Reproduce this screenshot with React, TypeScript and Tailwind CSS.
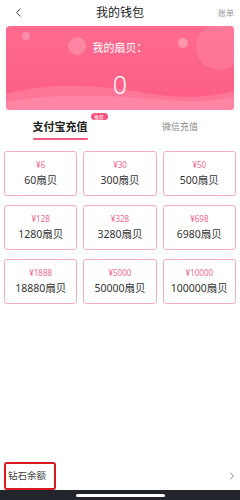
import { ChevronLeft, ChevronRight } from 'lucide-react';

const packs = [
  { price: '¥6', amount: '60扇贝' },
  { price: '¥30', amount: '300扇贝' },
  { price: '¥50', amount: '500扇贝' },
  { price: '¥128', amount: '1280扇贝' },
  { price: '¥328', amount: '3280扇贝' },
  { price: '¥698', amount: '6980扇贝' },
  { price: '¥1888', amount: '18880扇贝' },
  { price: '¥5000', amount: '50000扇贝' },
  { price: '¥10000', amount: '100000扇贝' },
];

export default function App() {
  return (
    <div
      className="w-[240px] h-[500px] bg-white flex flex-col overflow-hidden"
      style={{ fontFamily: '"Noto Sans", "Noto Sans CJK SC", sans-serif' }}
    >
      {/* header */}
      <div className="h-[25px] flex items-center pl-[11px] pr-[6px] relative">
        <ChevronLeft className="w-[15px] h-[15px] text-[#333]" strokeWidth={1.5} />
        <div className="absolute left-0 right-0 text-center text-[12px] text-[#222] leading-none pointer-events-none">
          我的钱包
        </div>
        <div className="ml-auto text-[8px] text-[#999]">账单</div>
      </div>

      {/* balance card */}
      <div className="mx-[6px] mt-[1px] h-[84px] rounded-[4px] relative overflow-hidden bg-gradient-to-b from-[#fe6b8e] to-[#fd5c84]">
        <div className="absolute w-[8px] h-[8px] rounded-full bg-white/25 left-[16px] top-[6px]" />
        <div className="absolute w-[18px] h-[18px] rounded-full bg-white/20 left-[62px] top-[11px]" />
        <div className="absolute w-[10px] h-[10px] rounded-full bg-white/30 left-[172px] top-[12px]" />
        <div className="absolute w-[46px] h-[46px] rounded-full bg-white/10 left-[190px] top-[-2px]" />
        <svg className="absolute left-0 bottom-0" width="228" height="30" viewBox="0 0 228 30" preserveAspectRatio="none">
          <path d="M0 14 C40 3 90 4 140 13 C180 20 210 16 228 11 L228 30 L0 30 Z" fill="#ff88a5" opacity="0.55" />
          <path d="M0 22 C50 12 110 16 160 20 C190 23 215 20 228 17 L228 30 L0 30 Z" fill="#ff9ab4" opacity="0.45" />
        </svg>
        <div className="relative flex flex-col items-center">
          <div className="mt-[16px] text-[11px] text-white leading-none">我的扇贝：</div>
          <div className="mt-[19px] text-[25px] font-light text-white leading-none">0</div>
        </div>
      </div>

      {/* tabs */}
      <div className="h-[38px] flex items-start pt-[11px]">
        <div className="w-[120px] flex justify-center">
          <div className="relative flex flex-col items-center">
            <div className="text-[11px] font-bold text-[#222] leading-none">支付宝充值</div>
            <div className="mt-[6px] w-[55px] h-[2px] bg-[#f25a80] rounded" />
            <div className="absolute left-[58px] top-[-8px] w-[17px] h-[7px] bg-[#f4557e] rounded-full flex items-center justify-center overflow-hidden">
              <span className="whitespace-nowrap text-white text-[8px] leading-none scale-[0.6]">推荐</span>
            </div>
          </div>
        </div>
        <div className="w-[120px] flex justify-center">
          <div className="text-[9px] text-[#888] leading-none mt-[1px]">微信充值</div>
        </div>
      </div>

      {/* grid */}
      <div className="grid grid-cols-3 gap-x-[6px] gap-y-[9px] px-[4px] mt-[3px]">
        {packs.map((p) => (
          <div
            key={p.price}
            className="h-[45px] rounded-[3px] border border-[#f2adc0] flex flex-col items-center justify-center"
          >
            <div className="text-[8px] text-[#f4678e] leading-none">{p.price}</div>
            <div className="mt-[6px] text-[10.5px] text-[#333] leading-none">{p.amount}</div>
          </div>
        ))}
      </div>

      {/* bottom */}
      <div className="mt-auto flex items-center h-[28px] pr-[2px]">
        <div className="ml-[4px] h-[28px] w-[52px] border-2 border-[#d9181f] rounded-[3px] flex items-center pl-[2px]">
          <span className="text-[9.5px] text-[#444] leading-none">钻石余额</span>
        </div>
        <ChevronRight className="ml-auto w-[12px] h-[12px] text-[#555]" strokeWidth={1.5} />
      </div>
      <div className="h-[10px] bg-[#22252b] flex items-center justify-center">
        <div className="w-[89px] h-[3px] rounded-full bg-white" />
      </div>
    </div>
  );
}
